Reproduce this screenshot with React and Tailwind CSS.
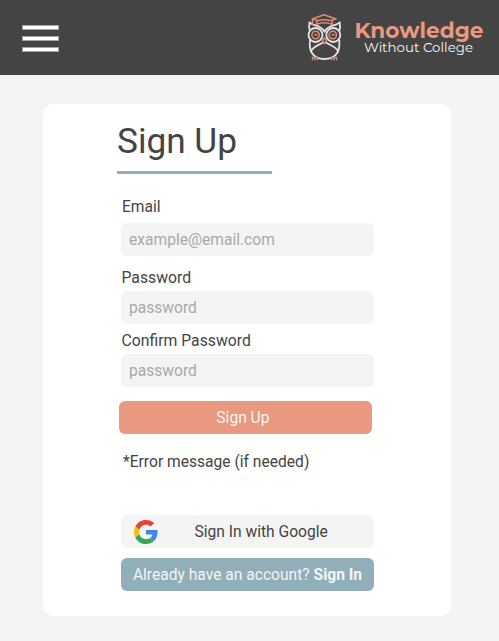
function Owl() {
  return (
    <svg className="h-[62px] w-[50px] shrink-0" viewBox="0 0 50 62" fill="none" strokeLinecap="round" strokeLinejoin="round">
      <g stroke="#e4e4e4" strokeWidth="1.8">
        <path d="M9.6 17.5C8.8 20.5 9 23 9.8 25.5M39.6 17.5C40.4 20.5 40.2 23 39.4 25.5" />
        <path d="M9.6 17.5C13 21.5 21.5 19.5 24.5 27C27.5 19.5 36 21.5 39.6 17.5" />
        <circle cx="15.5" cy="30" r="7" />
        <circle cx="33.3" cy="30" r="7" />
        <path d="M10 35C8.8 45 12 54 24.5 54S40.3 45 39.2 35" />
        <path d="M11 46.5C12.5 41.5 18.5 40.5 22.5 37.8M26.5 37.8C30.5 40.5 36.5 41.5 38.2 46.5" />
      </g>
      <g stroke="#e08a72" strokeWidth="1.5">
        <path d="M12.5 14L24 9.8L36 14L30 15.6C26 14.6 22 14.6 18 15.6Z" />
        <path d="M16.8 15.8V19.2C21.5 17.4 27.5 17.4 32.2 19.2V15.8M12.5 14V19.5" />
        <circle cx="15.6" cy="30" r="3.7" />
        <circle cx="32.8" cy="30" r="3.7" />
        <path d="M15 29.7H17M32.2 29.7H34.2" />
        <path d="M24.5 33L22.5 35.2L24.5 38.8L26.5 35.2Z" />
        <path d="M12.5 52.5V54.8M15 52.5V54.8M17.5 52.5V54.8M12.5 52.5H17.5M31.5 52.5V54.8M34 52.5V54.8M36.5 52.5V54.8M31.5 52.5H36.5" />
      </g>
    </svg>
  );
}

function Wordmark() {
  return (
    <svg className="h-[50px] w-[144px]" viewBox="350 10 144 50" fontFamily="Montserrat, Inter, sans-serif">
      <text x="354.5" y="37.7" fontSize="21.5" fontWeight="700" fill="#e89980" textLength="129" lengthAdjust="spacingAndGlyphs">Knowledge</text>
      <text x="364" y="52" fontSize="13.8" fill="#f4f4f4" textLength="109" lengthAdjust="spacingAndGlyphs">Without College</text>
    </svg>
  );
}

function GoogleLogo() {
  return (
    <svg className="size-6 shrink-0" viewBox="0 0 48 48">
      <path fill="#EA4335" d="M24 9.5c3.54 0 6.71 1.22 9.21 3.6l6.85-6.85C35.9 2.38 30.47 0 24 0 14.62 0 6.51 5.38 2.56 13.22l7.98 6.19C12.43 13.72 17.74 9.5 24 9.5z" />
      <path fill="#4285F4" d="M46.98 24.55c0-1.57-.15-3.09-.38-4.55H24v9.02h12.94c-.58 2.96-2.26 5.48-4.78 7.18l7.73 6c4.51-4.18 7.09-10.36 7.09-17.65z" />
      <path fill="#FBBC05" d="M10.53 28.59c-.48-1.45-.76-2.99-.76-4.59s.27-3.14.76-4.59l-7.98-6.19C.92 16.46 0 20.12 0 24c0 3.88.92 7.54 2.56 10.78l7.97-6.19z" />
      <path fill="#34A853" d="M24 48c6.48 0 11.93-2.13 15.89-5.81l-7.73-6c-2.15 1.45-4.92 2.3-8.16 2.3-6.26 0-11.57-4.22-13.47-9.91l-7.98 6.19C6.51 42.62 14.62 48 24 48z" />
    </svg>
  );
}

function Field({ label, id, type, placeholder, labelClass }) {
  return (
    <div className="flex flex-col">
      <label htmlFor={id} className={labelClass}>{label}</label>
      <input
        id={id}
        type={type}
        placeholder={placeholder}
        className="h-[33px] w-[253px] rounded-md bg-[#f4f4f4] px-2 pt-[2px] text-[15.6px] placeholder:text-[#a9a9a9] outline-none"
      />
    </div>
  );
}

export default function App() {
  return (
    <div className="flex h-[641px] w-[499px] flex-col overflow-hidden bg-[#f4f4f4] font-['Roboto',sans-serif] text-[15.6px] text-[#444444]">
      <header className="flex h-[75px] shrink-0 items-start justify-between bg-[#444444]">
        <button aria-label="Menu" className="ml-[22px] mt-[25px] flex w-[37px] flex-col gap-[6px]">
          <span className="h-[5px] border border-[#a3a3a3] bg-white" />
          <span className="h-[5px] border border-[#a3a3a3] bg-white" />
          <span className="h-[5px] border border-[#a3a3a3] bg-white" />
        </button>
        <div className="mr-[5px] mt-[5px] flex">
          <Owl />
          <div className="mt-[5px]"><Wordmark /></div>
        </div>
      </header>

      <main className="ml-[43px] mt-[28.5px] flex h-[512.5px] w-[408px] shrink-0 flex-col rounded-[10px] bg-white pl-[78px]">
        <h1 className="-ml-[4px] mt-[16px] h-[54px] w-[155px] border-b-3 border-[#90afb9] text-[35.2px] leading-[43px]">Sign Up</h1>

        <form className="mt-[21px] flex flex-col">
          <Field label="Email" id="email" type="email" placeholder="example@email.com" labelClass="ml-px h-[28px] leading-6" />
          <div className="h-[10px]" />
          <Field label="Password" id="password" type="password" placeholder="password" labelClass="ml-[0.5px] h-[25px] text-[15.75px] leading-6" />
          <div className="h-[5px]" />
          <Field label="Confirm Password" id="confirm" type="password" placeholder="password" labelClass="ml-[0.5px] h-[25px] text-[15.75px] leading-6" />
          <button type="button" className="-ml-[1.6px] mt-[14.5px] h-[33px] w-[253px] rounded-md bg-[#e89980] pr-[6px] pt-[2px] text-[#f4f4f4]">Sign Up</button>
        </form>

        <p className="ml-[2px] mt-[15.5px] h-[24px] leading-6">*Error message (if needed)</p>

        <button className="mt-[41.5px] flex h-[33px] w-[253px] shrink-0 items-center rounded-md bg-[#f4f4f4] pl-[13px] pt-px">
          <GoogleLogo />
          <span className="ml-[36.5px] pt-[2px]">Sign In with Google</span>
        </button>
        <button className="mt-[10px] h-[33px] w-[253px] shrink-0 rounded-md bg-[#90afb9] pt-[2px] text-[#f4f4f4]">
          Already have an account? <strong className="font-bold">Sign In</strong>
        </button>
      </main>
    </div>
  );
}
